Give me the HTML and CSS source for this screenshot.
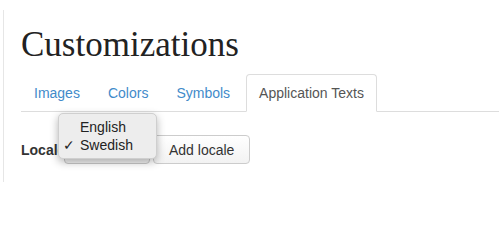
FILE: index.html
```html
<!DOCTYPE html>
<html>
<head>
<meta charset="utf-8">
<link rel="stylesheet" href="styles.css">
</head>
<body>
<div class="page">
  <h1 class="title">Customizations</h1>
  <ul class="tabs">
    <li class="tab"><a href="#">Images</a></li>
    <li class="tab"><a href="#">Colors</a></li>
    <li class="tab"><a href="#">Symbols</a></li>
    <li class="tab active"><a href="#">Application Texts</a></li>
  </ul>
  <div class="locale-row">
    <label class="locale-label">Locale</label>
    <div class="select-wrap">
      <div class="select-box"></div>
      <div class="popup">
        <div class="item"><span class="check"></span>English</div>
        <div class="item"><span class="check">✓</span>Swedish</div>
      </div>
    </div>
    <button class="btn">Add locale</button>
  </div>
</div>
</body>
</html>
```
FILE: styles.css
```css
html, body {
  margin: 0;
  padding: 0;
  background: #fff;
}
body {
  font-family: "Liberation Sans", Arial, sans-serif;
  font-size: 14px;
  color: #333;
}
.page {
  margin: 10px 0 0 3px;
  border-left: 1px solid #e6e6e6;
  padding: 15px 0 0 17px;
  height: 157px;
}
.title {
  font-family: "Liberation Serif", Georgia, serif;
  font-weight: normal;
  font-size: 35px;
  line-height: 40px;
  margin: 0;
  color: #222;
}
.tabs {
  list-style: none;
  margin: 9px 0 0 0;
  padding: 0;
  display: flex;
  border-bottom: 1px solid #ddd;
}
.tab {
  margin-right: 2px;
  margin-bottom: -1px;
}
.tab a {
  display: block;
  padding: 8px 12px;
  line-height: 20px;
  border: 1px solid transparent;
  border-radius: 4px 4px 0 0;
  color: #428bca;
  text-decoration: none;
}
.tab.active {
  margin-left: 1px;
}
.tab.active a {
  color: #555;
  background: #fff;
  border-color: #ddd #ddd transparent #ddd;
}
.locale-row {
  display: flex;
  align-items: center;
  margin-top: 23px;
  height: 29px;
}
.locale-label {
  font-weight: bold;
  width: 43px;
}
.select-wrap {
  position: relative;
  width: 86px;
  height: 29px;
  margin-right: 3px;
}
.select-box {
  height: 27px;
  border: 1px solid #c8c8c8;
  border-radius: 4px;
  background: #f4f4f4;
}
.popup {
  position: absolute;
  left: -6px;
  top: -22px;
  width: 97px;
  padding: 4px 0;
  background: #ededed;
  border: 1px solid #cfcfcf;
  border-radius: 5px;
  box-shadow: 0 3px 8px rgba(0,0,0,0.3);
}
.item {
  display: flex;
  font-size: 14px;
  line-height: 18px;
  color: #222;
}
.check {
  width: 17px;
  padding-left: 4px;
  text-align: left;
}
.btn {
  font-family: "Liberation Sans", Arial, sans-serif;
  font-size: 14px;
  color: #333;
  height: 29px;
  padding: 0 15px;
  border: 1px solid #ccc;
  border-radius: 4px;
  background: linear-gradient(#fff, #f2f2f2);
}
```
